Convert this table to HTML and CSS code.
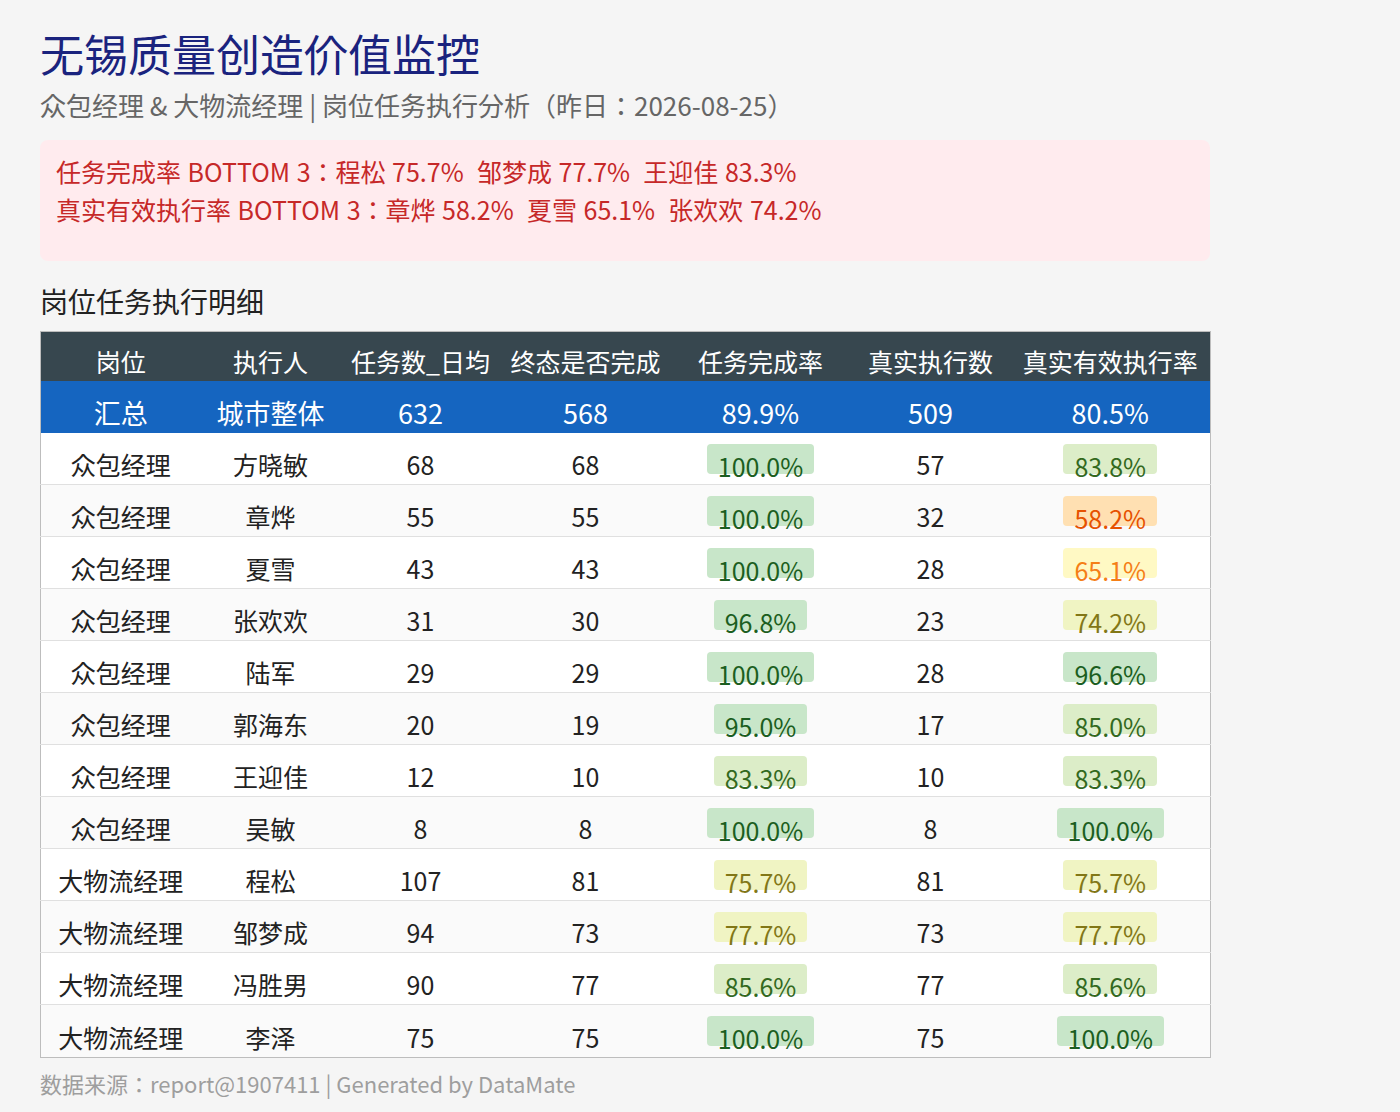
FILE: index.html
```html
<!DOCTYPE html>
<html lang="ja">
<head>
<meta charset="utf-8">
<title>无锡质量创造价值监控</title>
<link rel="stylesheet" href="styles.css">
</head>
<body>
<div class="page">
  <h1 class="title">无锡质量创造价值监控</h1>
  <div class="subtitle">众包经理 &amp; 大物流经理 | 岗位任务执行分析（昨日：2026-08-25）</div>
  <div class="alert">
    <div class="alert-line">任务完成率 BOTTOM 3：程松 75.7%&nbsp;&nbsp;邹梦成 77.7%&nbsp;&nbsp;王迎佳 83.3%</div>
    <div class="alert-line">真实有效执行率 BOTTOM 3：章烨 58.2%&nbsp;&nbsp;夏雪 65.1%&nbsp;&nbsp;张欢欢 74.2%</div>
  </div>
  <h2 class="section-title">岗位任务执行明细</h2>
  <table class="grid">
    <colgroup>
      <col class="c1"><col class="c2"><col class="c3"><col class="c4"><col class="c5"><col class="c6"><col class="c7">
    </colgroup>
    <thead>
      <tr><th>岗位</th><th>执行人</th><th>任务数_日均</th><th>终态是否完成</th><th>任务完成率</th><th>真实执行数</th><th>真实有效执行率</th></tr>
    </thead>
    <tbody>
      <tr class="summary"><td>汇总</td><td>城市整体</td><td>632</td><td>568</td><td>89.9%</td><td>509</td><td>80.5%</td></tr>
      <tr class="row"><td>众包经理</td><td>方晓敏</td><td>68</td><td>68</td><td><span class="badge b-a">100.0%</span></td><td>57</td><td><span class="badge b-b">83.8%</span></td></tr>
      <tr class="row alt"><td>众包经理</td><td>章烨</td><td>55</td><td>55</td><td><span class="badge b-a">100.0%</span></td><td>32</td><td><span class="badge b-e">58.2%</span></td></tr>
      <tr class="row"><td>众包经理</td><td>夏雪</td><td>43</td><td>43</td><td><span class="badge b-a">100.0%</span></td><td>28</td><td><span class="badge b-d">65.1%</span></td></tr>
      <tr class="row alt"><td>众包经理</td><td>张欢欢</td><td>31</td><td>30</td><td><span class="badge b-a">96.8%</span></td><td>23</td><td><span class="badge b-c">74.2%</span></td></tr>
      <tr class="row"><td>众包经理</td><td>陆军</td><td>29</td><td>29</td><td><span class="badge b-a">100.0%</span></td><td>28</td><td><span class="badge b-a">96.6%</span></td></tr>
      <tr class="row alt"><td>众包经理</td><td>郭海东</td><td>20</td><td>19</td><td><span class="badge b-a">95.0%</span></td><td>17</td><td><span class="badge b-b">85.0%</span></td></tr>
      <tr class="row"><td>众包经理</td><td>王迎佳</td><td>12</td><td>10</td><td><span class="badge b-b">83.3%</span></td><td>10</td><td><span class="badge b-b">83.3%</span></td></tr>
      <tr class="row alt"><td>众包经理</td><td>吴敏</td><td>8</td><td>8</td><td><span class="badge b-a">100.0%</span></td><td>8</td><td><span class="badge b-a">100.0%</span></td></tr>
      <tr class="row"><td>大物流经理</td><td>程松</td><td>107</td><td>81</td><td><span class="badge b-c">75.7%</span></td><td>81</td><td><span class="badge b-c">75.7%</span></td></tr>
      <tr class="row alt"><td>大物流经理</td><td>邹梦成</td><td>94</td><td>73</td><td><span class="badge b-c">77.7%</span></td><td>73</td><td><span class="badge b-c">77.7%</span></td></tr>
      <tr class="row"><td>大物流经理</td><td>冯胜男</td><td>90</td><td>77</td><td><span class="badge b-b">85.6%</span></td><td>77</td><td><span class="badge b-b">85.6%</span></td></tr>
      <tr class="row alt last"><td>大物流经理</td><td>李泽</td><td>75</td><td>75</td><td><span class="badge b-a">100.0%</span></td><td>75</td><td><span class="badge b-a">100.0%</span></td></tr>
    </tbody>
  </table>
  <div class="footer">数据来源：report@1907411 | Generated by DataMate</div>
</div>
</body>
</html>
```

FILE: styles.css
```css
html, body {
  margin: 0;
  padding: 0;
  background: #f5f5f5;
}

body {
  font-family: "Noto Sans CJK JP", "Noto Sans CJK SC", "Noto Sans", sans-serif;
  color: #222;
}

.page {
  width: 1170px;
  padding: 25px 40px 0;
}

.title {
  margin: 0;
  font-size: 44px;
  font-weight: 400;
  line-height: 57px;
  color: #1a237e;
}

.subtitle {
  margin-top: 6px;
  font-size: 26px;
  line-height: 34px;
  color: #666;
}

.alert {
  margin-top: 18px;
  padding: 12px 16px 33px;
  background: #ffebee;
  border-radius: 8px;
  color: #c62828;
  font-size: 25px;
  line-height: 38px;
}

.alert-line {
  word-spacing: 1px;
}

.section-title {
  margin: 21px 0 10px;
  font-size: 28px;
  font-weight: 400;
  line-height: 39px;
  color: #222;
}

.grid {
  width: 1170px;
  border-collapse: collapse;
  border: 1px solid #bdbdbd;
  table-layout: fixed;
  font-size: 25px;
}

.c1 { width: 160px; }
.c2 { width: 140px; }
.c3 { width: 160px; }
.c4 { width: 170px; }
.c5 { width: 180px; }
.c6 { width: 160px; }
.c7 { width: 200px; }

.grid th {
  background: #37474f;
  color: #fff;
  font-weight: 400;
  padding: 9px 0 0;
  line-height: 40px;
  vertical-align: top;
  text-align: center;
  white-space: nowrap;
}

.grid td {
  padding: 12px 0 0;
  line-height: 39px;
  vertical-align: top;
  text-align: center;
  white-space: nowrap;
}

.grid .row td {
  background: #fff;
  color: #222;
  border-bottom: 1px solid #e0e0e0;
}

.grid .row.alt td {
  background: #fafafa;
}

.grid .row.last td {
  border-bottom: none;
  line-height: 40px;
}

.grid .summary td {
  background: #1565c0;
  color: #fff;
  font-size: 27px;
  padding-top: 11px;
  line-height: 41px;
}

.badge {
  display: inline-block;
  height: 30px;
  padding: 0 11px;
  margin-top: -1px;
  border-radius: 4px;
  line-height: 44px;
  vertical-align: top;
  box-sizing: border-box;
}

.b-a { background: #c8e6c9; color: #1b5e20; }
.b-b { background: #dcedc8; color: #33691e; }
.b-c { background: #f0f4c3; color: #827717; }
.b-d { background: #fff9c4; color: #f57f17; }
.b-e { background: #ffe0b2; color: #e65100; }

.footer {
  margin-top: 9px;
  font-size: 22px;
  line-height: 32px;
  color: #9e9e9e;
}
```
